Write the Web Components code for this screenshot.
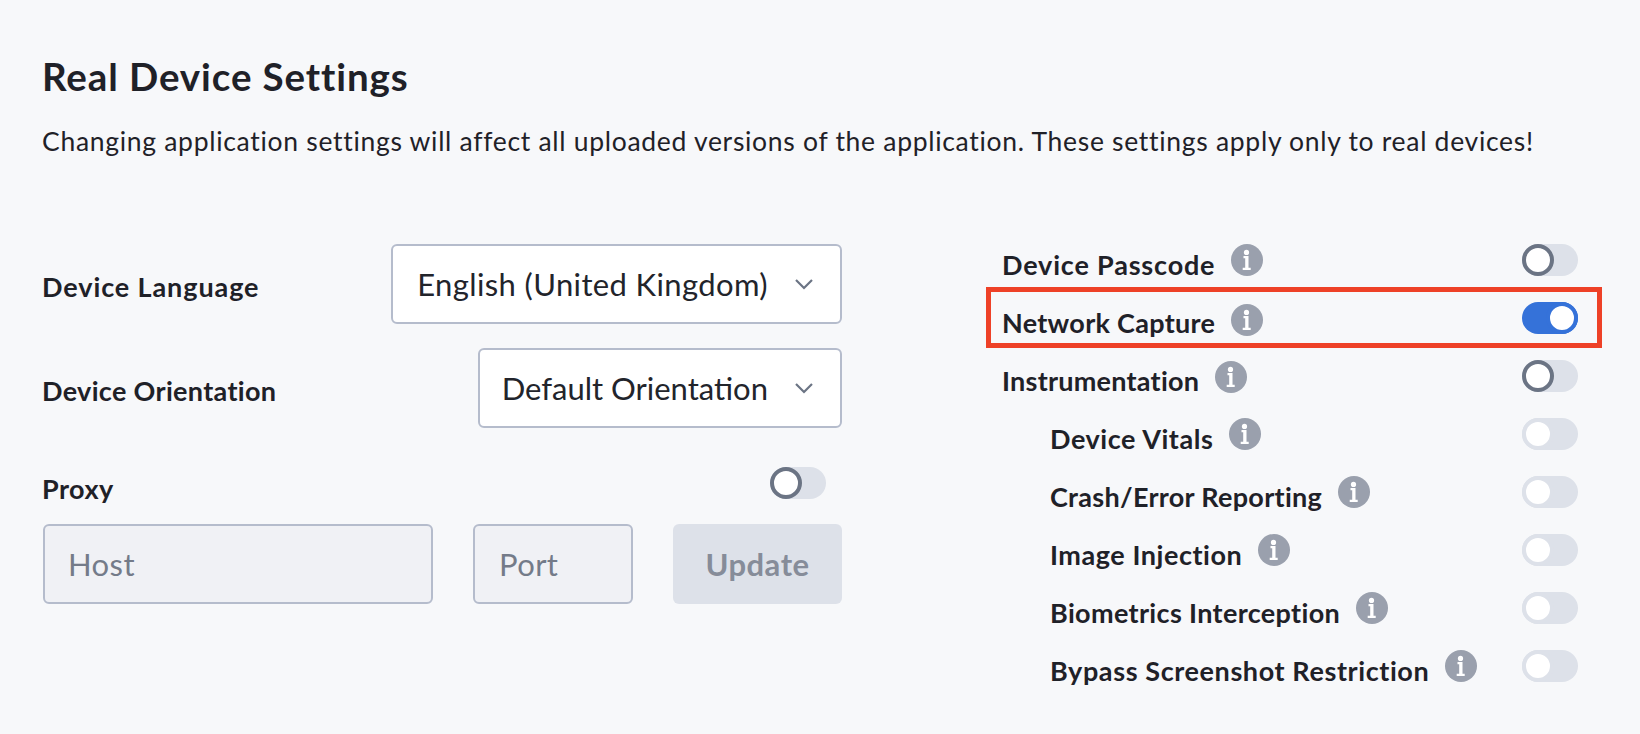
<!DOCTYPE html>
<html><head><meta charset="utf-8"><style>
html,body{margin:0;padding:0;background:#f7f8fa;height:734px;overflow:hidden}
body{font-family:"Lato","Liberation Sans",sans-serif;color:#1f2128}
</style></head><body>
<settings-page></settings-page>
<script>
function def(name,css,html){
  customElements.define(name,class extends HTMLElement{
    constructor(){super();const s=this.attachShadow({mode:'open'});s.innerHTML='<style>'+css+'</style>'+html;}
  });
}
def('x-toggle',`
:host{display:inline-block;flex:none;width:56px;height:32px;border-radius:16px;background:#dde1e9;position:relative}
i{position:absolute;left:0;top:0;width:32px;height:32px;box-sizing:border-box;border-radius:50%;background:#fff;border:4px solid #6b7484}
:host([on]){background:#3572d9}
:host([on]) i{left:24px;border-color:#3572d9}
:host([off]) i{border-color:#dde1e9}
`,'<i></i>');
def('x-info',`
:host{display:inline-block;flex:none;width:32px;height:32px}
svg{display:block}
`,`<svg width="32" height="32" viewBox="0 0 32 32"><circle cx="16" cy="16" r="16" fill="#9aa0ad"/><circle cx="15.5" cy="8.4" r="2.6" fill="#fff"/><path d="M12.5 12h5v11.8h2.2v2.2h-8v-2.2h2.5v-9.6h-1.7z" fill="#fff"/></svg>`);
def('x-select',`
:host{display:flex;align-items:center;box-sizing:border-box;height:80px;background:#fff;border:2px solid #b5bccc;border-radius:6px;padding:0 26px 0 var(--pl,24px);font-size:31px;letter-spacing:var(--ls,.38px);color:#22242b;white-space:nowrap}
span{flex:1}
svg{display:block;margin-left:26px;flex:none}
`,`<span><slot></slot></span><svg width="20" height="12" viewBox="0 0 20 12"><path d="M2 2l8 8 8-8" fill="none" stroke="#6b7484" stroke-width="2.2"/></svg>`);
def('x-field',`
:host{display:flex;align-items:center;box-sizing:border-box;height:80px;background:#f0f1f5;border:2px solid #b5bccc;border-radius:6px;padding:0 var(--pl,24px);font-size:31px;letter-spacing:.4px;color:#747b89}
`,'<slot></slot>');
def('x-button',`
:host{display:flex;align-items:center;justify-content:center;box-sizing:border-box;height:80px;background:#dde1e9;border-radius:6px;font-size:31px;font-weight:700;letter-spacing:.5px;color:#868c99}
`,'<slot></slot>');
def('x-label',`
:host{display:block;font-size:27px;font-weight:700;letter-spacing:var(--ls,.45px);color:#1f2128;white-space:nowrap;margin-left:var(--ml,-1px)}
`,'<slot></slot>');
def('x-row',`
:host{display:flex;align-items:center;height:58px;box-sizing:border-box;--ml:0px}
:host([sub]){padding-left:48px}
.l{padding-top:9px;line-height:32px}
.g{flex:1}
x-info{margin-left:16px;margin-top:var(--it,0px)}
`,`<x-label class="l"><slot></slot></x-label><x-info></x-info><div class="g"></div><slot name="t"></slot>`);
def('settings-page',`
:host{display:block;padding:53px 0 0 43px;width:1640px;box-sizing:border-box}
h1{margin:0 0 0 -1px;font-size:38.5px;line-height:46px;font-weight:700;letter-spacing:.9px;color:#1f2128}
p{margin:25px 0 0 -1px;font-size:26.5px;line-height:34px;letter-spacing:.7px;color:#1f2128;white-space:nowrap}
.cols{display:flex;margin-top:86px}
.left{width:799px;display:flex;flex-direction:column}
.line{display:flex;align-items:center;justify-content:space-between}
.line x-label{padding-top:4px}
.proxy{margin-top:38px;padding-right:16px;height:34px}
.proxy x-label{padding-top:10px}
.inputs{display:flex;gap:40px;margin-top:24px}
.host{width:390px}.port{width:160px}.upd{width:169px}
.right{margin-left:160px;width:576px;margin-top:-13px}
.right .box{box-sizing:border-box;margin:-2px -24px -1px -16px;padding:1px 24px 0 16px;outline:5px solid #ee4127;outline-offset:-5px;height:61px;display:flex;flex-direction:column;justify-content:center}
.gap{height:24px}
`,`
<h1>Real Device Settings</h1>
<p>Changing application settings will affect all uploaded versions of the application. These settings apply only to real devices!</p>
<div class="cols">
 <div class="left">
  <div class="line"><x-label style="--ls:.9px">Device Language</x-label><x-select>English (United Kingdom)</x-select></div>
  <div class="gap"></div>
  <div class="line"><x-label style="--ls:.33px">Device Orientation</x-label><x-select style="--ls:0px;--pl:22px">Default Orientation</x-select></div>
  <div class="line proxy"><x-label>Proxy</x-label><x-toggle></x-toggle></div>
  <div class="inputs"><x-field class="host" style="--pl:23px">Host</x-field><x-field class="port">Port</x-field><x-button class="upd">Update</x-button></div>
 </div>
 <div class="right">
  <x-row style="--ls:.82px">Device Passcode<x-toggle slot="t"></x-toggle></x-row>
  <div class="box"><x-row style="--ls:.3px;--it:3px">Network Capture<x-toggle slot="t" on></x-toggle></x-row></div>
  <x-row style="--ls:.25px;--it:2px">Instrumentation<x-toggle slot="t"></x-toggle></x-row>
  <x-row sub style="--ls:.55px">Device Vitals<x-toggle slot="t" off></x-toggle></x-row>
  <x-row sub style="--ls:.3px">Crash/Error Reporting<x-toggle slot="t" off></x-toggle></x-row>
  <x-row sub style="--ls:.55px">Image Injection<x-toggle slot="t" off></x-toggle></x-row>
  <x-row sub style="--ls:.35px">Biometrics Interception<x-toggle slot="t" off></x-toggle></x-row>
  <x-row sub style="--ls:.6px">Bypass Screenshot Restriction<x-toggle slot="t" off></x-toggle></x-row>
 </div>
</div>`);
</script>
</body></html>
